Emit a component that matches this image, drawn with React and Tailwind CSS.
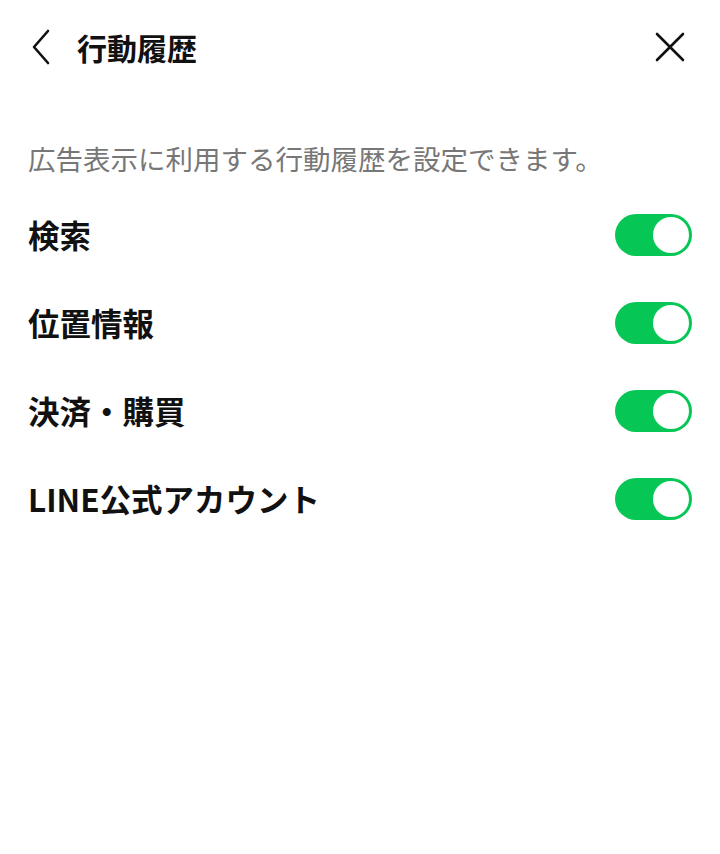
import React, { useState } from 'react';

const items = ['検索', '位置情報', '決済・購買', 'LINE公式アカウント'];

function Toggle({ on, onClick }) {
  return (
    <button
      onClick={onClick}
      className={`w-[77px] h-[42px] rounded-full flex items-center p-[3px] ${on ? 'bg-[#06c755] justify-end' : 'bg-[#d6d6d6] justify-start'}`}
    >
      <span className="block w-[36px] h-[36px] rounded-full bg-white" />
    </button>
  );
}

export default function App() {
  const [state, setState] = useState(items.map(() => true));

  return (
    <div
      className="w-[720px] h-[854px] bg-white text-[#111111]"
      style={{ fontFamily: '"Noto Sans CJK JP", "Noto Sans", sans-serif' }}
    >
      <div className="h-[94px] flex items-center px-[28px]">
        <svg width="30" height="40" viewBox="0 0 30 40" className="-ml-[2px]">
          <path d="M22 4 L8 20 L22 36" fill="none" stroke="#111" strokeWidth="2.6" strokeLinecap="round" strokeLinejoin="round" />
        </svg>
        <h1 className="ml-[21px] text-[30px] font-bold leading-none">行動履歴</h1>
        <div className="flex-1" />
        <svg width="32" height="32" viewBox="0 0 32 32" className="mr-[6px]">
          <path d="M3 3 L29 29 M29 3 L3 29" fill="none" stroke="#111" strokeWidth="2.6" strokeLinecap="round" />
        </svg>
      </div>

      <p className="mt-[44px] px-[28px] text-[27.5px] leading-[40px] text-[#777777] whitespace-nowrap">
        広告表示に利用する行動履歴を設定できます。
      </p>

      <div className="mt-[13px]">
        {items.map((label, i) => (
          <div key={label} className="h-[88px] flex items-center justify-between px-[28px]">
            <span className="text-[31.5px] font-bold">{label}</span>
            <Toggle
              on={state[i]}
              onClick={() => setState(s => s.map((v, j) => (j === i ? !v : v)))}
            />
          </div>
        ))}
      </div>
    </div>
  );
}
